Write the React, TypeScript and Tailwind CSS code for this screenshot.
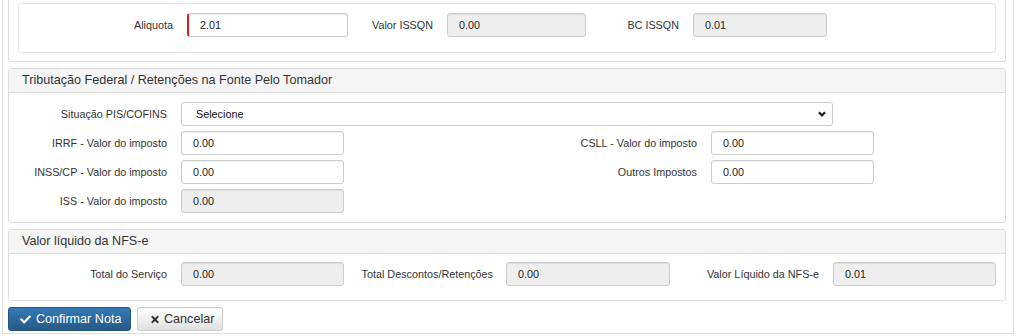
import { FaCheck, FaTimes } from 'react-icons/fa';

const font = "font-['Liberation_Sans',Arial,sans-serif]";

function Label({ w, text }: { w: string; text: string }) {
  return <div className={`${w} shrink-0 text-right text-[10.8px] text-[#333] leading-[24px] whitespace-nowrap`}>{text}</div>;
}

function Field({ w, value, readOnly, ml = 'ml-[14px]', required }: { w: string; value: string; readOnly?: boolean; ml?: string; required?: boolean }) {
  return (
    <div
      className={`${w} ${ml} shrink-0 h-[24px] rounded-[3px] border border-[#ccc] pl-[11px] text-[10.8px] leading-[22px] text-[#222] shadow-[inset_0_1px_1px_rgba(0,0,0,0.075)] ${
        readOnly ? 'bg-[#eee]' : 'bg-white'
      } ${required ? 'border-l-2 border-l-[#e2181c]' : ''}`}
    >
      {value}
    </div>
  );
}

function Panel({ title, children, body }: { title: string; children: React.ReactNode; body: string }) {
  return (
    <div className="w-[998px] mt-[6px] rounded-[3px] border border-[#ddd] bg-white">
      <div className="h-[24px] border-b border-[#ddd] bg-[#f5f5f5] pl-[13px] text-[12.6px] leading-[23px] text-[#333] rounded-t-[3px]">
        {title}
      </div>
      <div className={body}>{children}</div>
    </div>
  );
}

export default function App() {
  return (
    <div className={`w-[1024px] h-[336px] overflow-hidden bg-white ${font}`}>
      <div className="ml-[2px] w-[1012px] border-x border-b border-[#ddd] pl-[5px] pb-[2px]">
        {/* ISSQN */}
        <div className="w-[998px] rounded-b-[3px] border-x border-b border-[#ddd] px-[9px] pt-[3px] pb-[8px]">
          <div className="h-[50px] rounded-[3px] border border-[#e3e3e3] pt-[9px]">
            <div className="flex">
              <Label w="w-[154px]" text="Aliquota" />
              <Field w="w-[161px]" value="2.01" required />
              <Label w="w-[85px]" text="Valor ISSQN" />
              <Field w="w-[139px]" value="0.00" readOnly />
              <Label w="w-[93px]" text="BC ISSQN" />
              <Field w="w-[134px]" value="0.01" readOnly />
            </div>
          </div>
        </div>

        <Panel title="Tributação Federal / Retenções na Fonte Pelo Tomador" body="pt-[9px] pb-[9px] flex flex-col gap-[5px]">
          <div className="flex">
            <Label w="w-[158px]" text="Situação PIS/COFINS" />
            <div className="ml-[14px] w-[652px] h-[24px] rounded-[3px] border border-[#ccc] bg-white pl-[14px] pr-[6px] flex items-center justify-between text-[10.8px] text-[#111]">
              <span>Selecione</span>
              <svg width="8" height="6" viewBox="0 0 8 6">
                <path d="M1 1.2 L4 4.4 L7 1.2" fill="none" stroke="#1a1a1a" strokeWidth="2.2" />
              </svg>
            </div>
          </div>
          <div className="flex">
            <Label w="w-[158px]" text="IRRF - Valor do imposto" />
            <Field w="w-[163px]" value="0.00" />
            <Label w="w-[353px]" text="CSLL - Valor do imposto" />
            <Field w="w-[163px]" value="0.00" />
          </div>
          <div className="flex">
            <Label w="w-[158px]" text="INSS/CP - Valor do imposto" />
            <Field w="w-[163px]" value="0.00" />
            <Label w="w-[353px]" text="Outros Impostos" />
            <Field w="w-[163px]" value="0.00" />
          </div>
          <div className="flex">
            <Label w="w-[158px]" text="ISS - Valor do imposto" />
            <Field w="w-[163px]" value="0.00" readOnly />
          </div>
        </Panel>

        <Panel title="Valor líquido da NFS-e" body="pt-[8px] pb-[14px] flex">
          <Label w="w-[158px]" text="Total do Serviço" />
          <Field w="w-[163px]" value="0.00" readOnly />
          <Label w="w-[149px]" text="Total Descontos/Retenções" />
          <Field w="w-[164px]" value="0.00" readOnly ml="ml-[13px]" />
          <Label w="w-[149px]" text="Valor Líquido da NFS-e" />
          <Field w="w-[163px]" value="0.01" readOnly />
        </Panel>

        <div className="mt-[6px] flex gap-[6px]">
          <button className="h-[24px] w-[123px] rounded-[3px] border border-[#245580] bg-linear-to-b from-[#337ab7] to-[#265a88] pl-[11px] flex items-center gap-[5px] text-[12.6px] text-white">
            <FaCheck className="w-[11px] h-[11px]" />
            <span>Confirmar Nota</span>
          </button>
          <button className="h-[24px] w-[86px] rounded-[3px] border border-[#ccc] bg-linear-to-b from-white to-[#e0e0e0] pl-[12px] flex items-center gap-[4px] text-[12.6px] text-[#333]">
            <FaTimes className="w-[10px] h-[11px]" />
            <span>Cancelar</span>
          </button>
        </div>
      </div>
    </div>
  );
}
